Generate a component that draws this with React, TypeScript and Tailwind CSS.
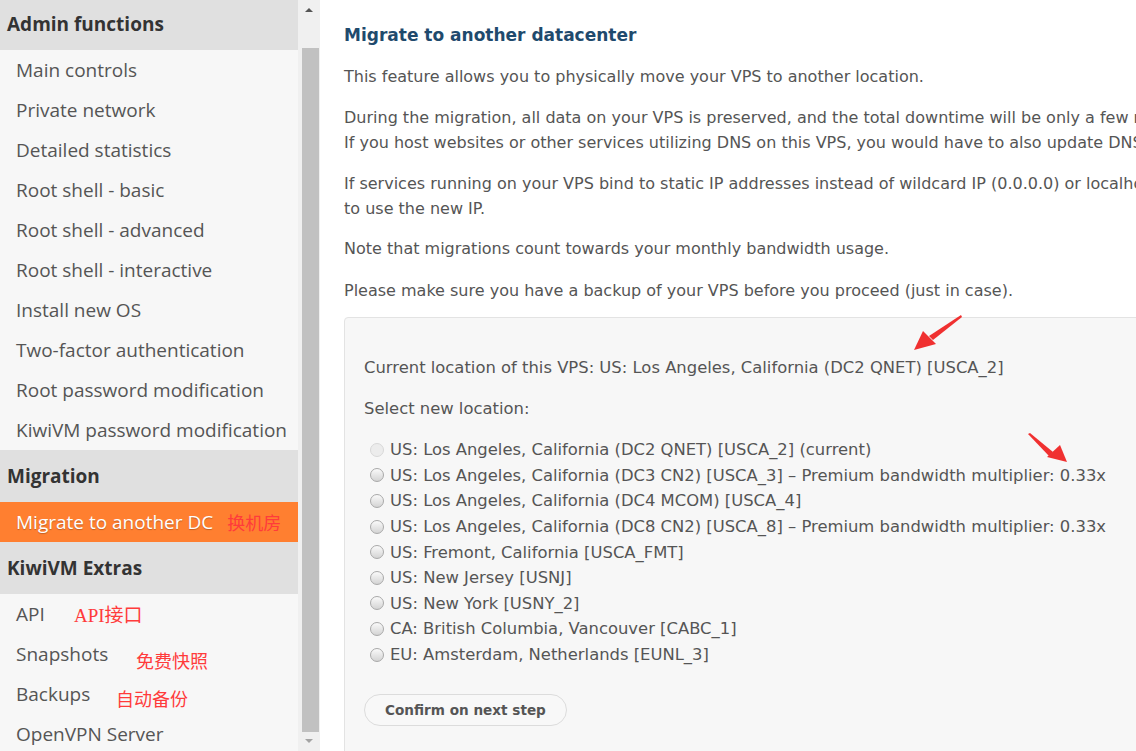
import React from "react";

const adminItems = [
  "Main controls",
  "Private network",
  "Detailed statistics",
  "Root shell - basic",
  "Root shell - advanced",
  "Root shell - interactive",
  "Install new OS",
  "Two-factor authentication",
  "Root password modification",
  "KiwiVM password modification",
];

const locations = [
  { label: "US: Los Angeles, California (DC2 QNET) [USCA_2] (current)", disabled: true },
  { label: "US: Los Angeles, California (DC3 CN2) [USCA_3] \u2013 Premium bandwidth multiplier: 0.33x" },
  { label: "US: Los Angeles, California (DC4 MCOM) [USCA_4]" },
  { label: "US: Los Angeles, California (DC8 CN2) [USCA_8] \u2013 Premium bandwidth multiplier: 0.33x" },
  { label: "US: Fremont, California [USCA_FMT]" },
  { label: "US: New Jersey [USNJ]" },
  { label: "US: New York [USNY_2]" },
  { label: "CA: British Columbia, Vancouver [CABC_1]" },
  { label: "EU: Amsterdam, Netherlands [EUNL_3]" },
];

function Header({ title }: { title: string }) {
  return (
    <div className="h-[52px] flex items-center px-[7px] bg-[#e0e0e0] text-[#333] font-bold text-[19px]">
      {title}
    </div>
  );
}

function Item({ label }: { label: string }) {
  return (
    <div className="h-[40px] flex items-center pl-[16px] text-[19px] text-[#555] bg-[#f7f7f7] whitespace-nowrap">
      {label}
    </div>
  );
}

function Radio({ disabled }: { disabled?: boolean }) {
  return (
    <span
      className={
        "inline-block w-[14px] h-[14px] rounded-full border mr-[6px] shrink-0 " +
        (disabled
          ? "border-[#d8d8d8] bg-[#ececec]"
          : "border-[#a9a9a9] bg-gradient-to-b from-[#fafafa] to-[#d4d4d4]")
      }
    />
  );
}

export default function App() {
  return (
    <div className="w-[1136px] h-[751px] flex overflow-hidden bg-white">
      {/* Sidebar */}
      <div className="w-[298px] shrink-0 bg-[#f7f7f7] overflow-hidden" style={{ fontFamily: "'Open Sans', sans-serif" }}>
        <div className="-mt-[2px]">
          <Header title="Admin functions" />
          {adminItems.map((t) => (
            <Item key={t} label={t} />
          ))}
          <Header title="Migration" />
          <div className="h-[40px] flex items-center pl-[16px] text-[19px] text-white bg-[#ff7f30] whitespace-nowrap [text-shadow:0_1px_1px_rgba(0,0,0,0.25)]">
            <span>Migrate to another DC</span>
            <span className="ml-[14px] text-[#ff3b3b] text-[18px] [text-shadow:none]" style={{ fontFamily: "'Noto Sans CJK SC', sans-serif" }}>
              换机房
            </span>
          </div>
          <Header title="KiwiVM Extras" />
          <div className="relative">
            <Item label="API" />
            <Item label="Snapshots" />
            <Item label="Backups" />
            <Item label="OpenVPN Server" />
            <span className="absolute left-[74px] top-[8px] text-[#ff3b3b] text-[19px]" style={{ fontFamily: "'Liberation Serif', 'Noto Sans CJK SC', serif" }}>
              API接口
            </span>
            <span className="absolute left-[136px] top-[53px] text-[#ff3b3b] text-[18px]" style={{ fontFamily: "'Noto Sans CJK SC', sans-serif" }}>
              免费快照
            </span>
            <span className="absolute left-[116px] top-[91px] text-[#ff3b3b] text-[18px]" style={{ fontFamily: "'Noto Sans CJK SC', sans-serif" }}>
              自动备份
            </span>
          </div>
        </div>
      </div>

      {/* Sidebar scrollbar */}
      <div className="w-[22px] shrink-0 bg-[#f0f0f0] flex flex-col items-center">
        <div className="h-[48px] w-full flex justify-center pt-[8px]">
          <span className="w-0 h-0 border-l-[4px] border-r-[4px] border-b-[4px] border-l-transparent border-r-transparent border-b-[#555]" />
        </div>
        <div className="w-[17px] ml-[3px] h-[684px] bg-[#c1c1c1]" />
        <div className="flex-1 w-full flex justify-center pt-[7px]">
          <span className="w-0 h-0 border-l-[4px] border-r-[4px] border-t-[4px] border-l-transparent border-r-transparent border-t-[#a3a3a3]" />
        </div>
      </div>

      {/* Main */}
      <div className="relative flex-1 overflow-hidden pl-[24px] pt-[23px] text-[16px] leading-[25px] text-[#555]" style={{ fontFamily: "Verdana, 'DejaVu Sans', sans-serif" }}>
        <div className="w-[1100px]">
          <h1 className="text-[17px] font-bold text-[#1f4a6d] leading-[25px] mb-[16px]">Migrate to another datacenter</h1>
          <p className="mb-[16px] whitespace-nowrap">This feature allows you to physically move your VPS to another location.</p>
          <p className="mb-[16px] whitespace-nowrap">
            During the migration, all data on your VPS is preserved, and the total downtime will be only a few minutes.
            <br />
            If you host websites or other services utilizing DNS on this VPS, you would have to also update DNS records.
          </p>
          <p className="mb-[15px] whitespace-nowrap">
            If services running on your VPS bind to static IP addresses instead of wildcard IP (0.0.0.0) or localhost, you would need to reconfigure them
            <br />
            to use the new IP.
          </p>
          <p className="mb-[17px] whitespace-nowrap">Note that migrations count towards your monthly bandwidth usage.</p>
          <p className="mb-[14px] whitespace-nowrap">Please make sure you have a backup of your VPS before you proceed (just in case).</p>

          <div className="bg-[#f7f7f7] border border-[#e3e3e3] rounded-tl-[4px] pl-[19px] pt-[37px] pb-[40px] text-[16.4px]">
            <p className="mb-[16px] whitespace-nowrap">Current location of this VPS: US: Los Angeles, California (DC2 QNET) [USCA_2]</p>
            <p className="mb-[16px]">Select new location:</p>
            <div className="flex flex-col">
              {locations.map((l) => (
                <label key={l.label} className="flex items-center h-[25.6px] pl-[6px] whitespace-nowrap">
                  <Radio disabled={l.disabled} />
                  <span>{l.label}</span>
                </label>
              ))}
            </div>
            <button className="mt-[27px] h-[32px] px-[20px] rounded-full border border-[#dcdcdc] bg-[#f8f8f8] text-[13.6px] font-bold text-[#555]">
              Confirm on next step
            </button>
          </div>
        </div>

        {/* Red annotation arrows */}
        <svg className="absolute left-0 top-0 pointer-events-none" width="816" height="751">
          <g fill="#f03030">
            <polygon points="641,315 642,317 613,340 609,336" />
            <polygon points="594,350 603,331 616,344" />
            <polygon points="708,434 710,433 733,452 729,456" />
            <polygon points="747,462 727,457 740,445" />
          </g>
        </svg>
      </div>
    </div>
  );
}
